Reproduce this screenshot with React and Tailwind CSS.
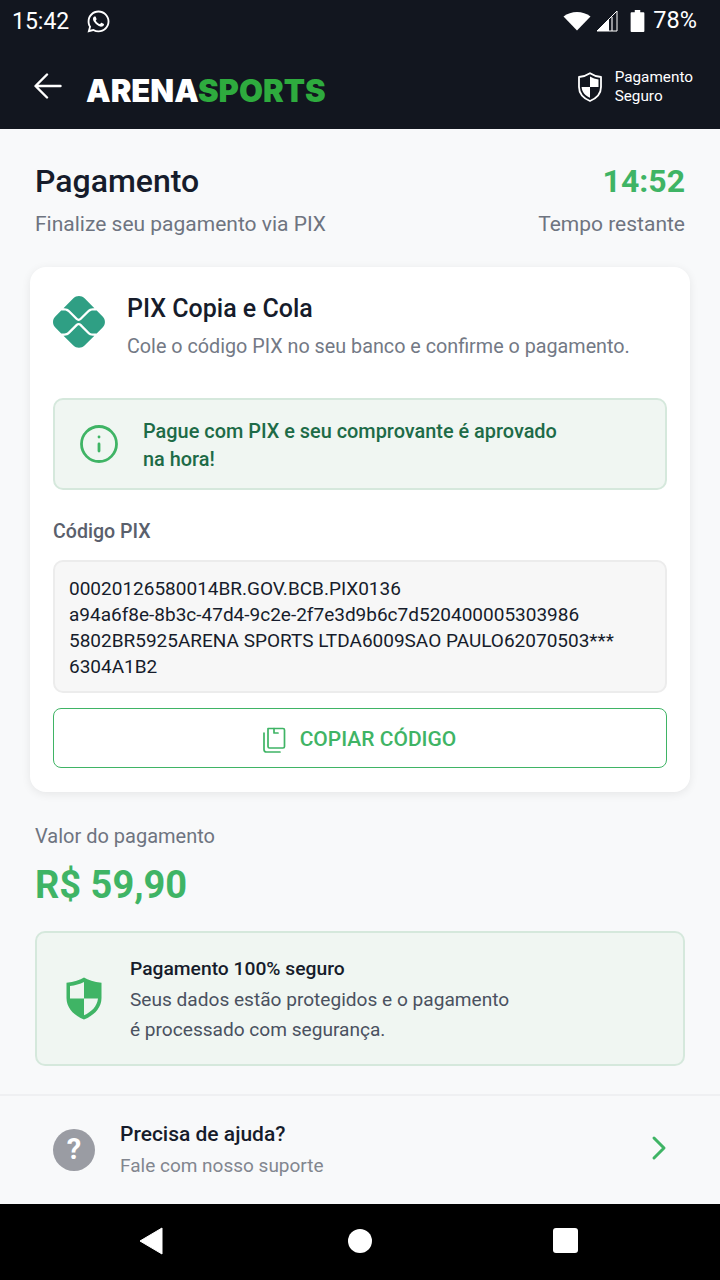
import React from 'react';
import { FaWhatsapp } from 'react-icons/fa';
import { FaPix } from 'react-icons/fa6';
import { ChevronRight, Info } from 'lucide-react';

const ShieldOutline = ({ className }) => (
    <svg viewBox="0 0 24 30" className={className}>
        <path d="M12 1.2 C15 3.2 19 4.6 23 5 V15 C23 22 18 26.5 12 29 C6 26.5 1 22 1 15 V5 C5 4.6 9 3.2 12 1.2 Z" fill="none" stroke="currentColor" strokeWidth="1.8" strokeLinejoin="round" />
        <path d="M12 4.5 C14.5 6 17.5 7 20.5 7.5 V15 H12 Z M12 15 V25.8 C7.5 23.8 4 20.5 3.6 15 Z" fill="currentColor" />
    </svg>
);

const ShieldFilled = ({ className }) => (
    <svg viewBox="0 0 36 43" className={className}>
        <path d="M18 0.5 C22 3 28 5 35.5 5.8 V21 C35.5 31 28 38.5 18 42.5 C8 38.5 0.5 31 0.5 21 V5.8 C8 5 14 3 18 0.5 Z" fill="currentColor" />
        <path d="M18 5 V21.5 H4 V9 C9 8.4 14 7 18 5 Z M18 21.5 H32 C31 29.5 25.5 35 18 38.2 Z" fill="#eef5f0" />
    </svg>
);

const CopyIcon = ({ className }) => (
    <svg viewBox="0 0 24 26" fill="none" stroke="currentColor" strokeWidth="1.7" strokeLinejoin="round" strokeLinecap="round" className={className}>
        <path d="M6 1.5 H21 A1.5 1.5 0 0 1 22.5 3 V19.5 A1.5 1.5 0 0 1 21 21 H7.5 A1.5 1.5 0 0 1 6 19.5 Z" />
        <path d="M2 6 V22.5 A2.5 2.5 0 0 0 4.5 25 H18" />
        <path d="M12 1.5 V6 H16" />
    </svg>
);

export default function App() {
    return (
        <div className="flex flex-col w-[720px] h-[1280px] overflow-hidden bg-[#f8f9fa] font-['Roboto',sans-serif]">
            {/* status bar + app header */}
            <div className="bg-[#12161f] text-white h-[129px] shrink-0">
                <div className="flex items-center justify-between h-[42px] pl-[12px] pr-[23px]">
                    <div className="flex items-center gap-[17px]">
                        <span className="text-[23px] leading-none">15:42</span>
                        <FaWhatsapp className="w-[25px] h-[25px]" />
                    </div>
                    <div className="flex items-center">
                        <svg viewBox="0 0 28 20" className="w-[28px] h-[20px]">
                            <path d="M14 19.5 L0.5 5.5 C8 -0.5 20 -0.5 27.5 5.5 Z" fill="white" />
                        </svg>
                        <svg viewBox="0 0 22 22" className="w-[22px] h-[22px] ml-[5px]">
                            <path d="M1 21 L21 1 V21 Z" fill="none" stroke="white" strokeWidth="1" />
                            <path d="M1 21 L13 9 V21 Z" fill="white" />
                            <path d="M15 7 H17 V21 H15 Z" fill="white" fillOpacity="0.55" />
                        </svg>
                        <svg viewBox="0 0 16 24" className="w-[15px] h-[22px] ml-[12px]">
                            <path d="M5 0 H11 V2.5 H14.5 A1 1 0 0 1 15.5 3.5 V23 A1 1 0 0 1 14.5 24 H1.5 A1 1 0 0 1 0.5 23 V3.5 A1 1 0 0 1 1.5 2.5 H5 Z" fill="white" />
                        </svg>
                        <span className="text-[23.5px] leading-none ml-[8px]">78%</span>
                    </div>
                </div>
                <div className="flex items-center justify-between h-[87px] pl-[34px] pr-[27px]">
                    <div className="flex items-center">
                        <svg viewBox="0 0 28 26" fill="none" stroke="currentColor" strokeWidth="2.4" strokeLinecap="round" strokeLinejoin="round" className="w-[28px] h-[26px]">
                            <path d="M26.5 13 H2 M13 1.5 L1.5 13 L13 24.5" />
                        </svg>
                        <span className="ml-[24px] mt-[9px] text-[31px] leading-none font-black tracking-[0px] font-['Inter',sans-serif]">
                            ARENA<span className="text-[#2eab3e]">SPORTS</span>
                        </span>
                    </div>
                    <div className="flex items-center gap-[13px] mt-[3px]">
                        <ShieldOutline className="w-[24px] h-[30px]" />
                        <div className="text-[15.3px] leading-[19px]">
                            <div>Pagamento</div>
                            <div>Seguro</div>
                        </div>
                    </div>
                </div>
            </div>

            {/* main */}
            <div className="flex-1 flex flex-col">
                <div className="flex justify-between px-[35px] pt-[33px]">
                    <div>
                        <h1 className="text-[32px] leading-[38px] font-medium text-[#161c2b]">Pagamento</h1>
                        <p className="text-[21px] leading-[24px] mt-[12px] text-[#6e7480]">Finalize seu pagamento via PIX</p>
                    </div>
                    <div className="text-right">
                        <div className="text-[32px] leading-[38px] font-bold text-[#3fb465]">14:52</div>
                        <div className="text-[21px] leading-[24px] mt-[12px] text-[#6e7480]">Tempo restante</div>
                    </div>
                </div>

                <div className="mx-[30px] mt-[31px] h-[525px] bg-white rounded-[16px] shadow-[0_2px_10px_rgba(0,0,0,0.08)] px-[23px] pt-[24px]">
                    <div className="flex items-start">
                        <FaPix className="w-[52px] h-[52px] mt-[5px] text-[#2f9f84]" />
                        <div className="ml-[22px] mt-[2px]">
                            <h2 className="text-[25px] leading-[32px] font-medium text-[#161c2b]">PIX Copia e Cola</h2>
                            <p className="text-[19.75px] leading-[24px] mt-[10px] text-[#737985]">Cole o código PIX no seu banco e confirme o pagamento.</p>
                        </div>
                    </div>

                    <div className="flex items-center mt-[39px] h-[92px] rounded-[10px] border-2 border-[#d5e8dc] bg-[#f0f6f2] pl-[23px]">
                        <Info className="w-[42px] h-[42px] text-[#3fb465] shrink-0" strokeWidth={1.6} />
                        <p className="ml-[23px] mt-[4px] text-[19.9px] leading-[28px] font-medium text-[#1d6b47]">
                            Pague com PIX e seu comprovante é aprovado<br />na hora!
                        </p>
                    </div>

                    <div className="mt-[30px] text-[19.6px] leading-[24px] font-medium text-[#5a606c]">Código PIX</div>

                    <div className="mt-[16px] h-[133px] rounded-[10px] border-2 border-[#ececec] bg-[#f7f7f7] px-[14px] pt-[14px] text-[19px] leading-[26px] text-[#161c2b] whitespace-nowrap">
                        00020126580014BR.GOV.BCB.PIX0136<br />
                        a94a6f8e-8b3c-47d4-9c2e-2f7e3d9b6c7d520400005303986<br />
                        5802BR5925ARENA SPORTS LTDA6009SAO PAULO62070503***<br />
                        6304A1B2
                    </div>

                    <button className="flex items-center justify-center w-full h-[60px] mt-[15px] pt-[3px] rounded-[8px] border border-[#3fb465] bg-white text-[#3fb465]">
                        <CopyIcon className="w-[24px] h-[26px] -ml-[2px]" />
                        <span className="ml-[14px] text-[21px] font-medium">COPIAR CÓDIGO</span>
                    </button>
                </div>

                <div className="px-[35px] mt-[32px]">
                    <div className="text-[20px] leading-[24px] text-[#6e7480]">Valor do pagamento</div>
                    <div className="text-[38px] leading-[46px] mt-[14px] font-bold text-[#3fb465]">R$ 59,90</div>
                </div>

                <div className="flex items-center mx-[35px] mt-[23px] h-[135px] rounded-[10px] border-2 border-[#d5e8dc] bg-[#f0f6f2] pl-[29px]">
                    <ShieldFilled className="w-[36px] h-[43px] text-[#3fb465]" />
                    <div className="ml-[28px] mt-[4px]">
                        <div className="text-[19.25px] leading-[26px] font-medium text-[#161c2b]">Pagamento 100% seguro</div>
                        <div className="text-[19.1px] leading-[30px] mt-[3px] text-[#4a5160]">
                            Seus dados estão protegidos e o pagamento<br />é processado com segurança.
                        </div>
                    </div>
                </div>

                <div className="flex items-center flex-1 mt-[28px] border-t-2 border-[#eff0f2] pl-[53px] pr-[41px] pb-[1px]">
                    <div className="flex items-center justify-center w-[42px] h-[42px] rounded-full bg-[#9a9ca3] text-white text-[29px] font-bold">?</div>
                    <div className="ml-[25px] flex-1 -mt-[1px]">
                        <div className="text-[21px] leading-[26px] font-medium text-[#161c2b]">Precisa de ajuda?</div>
                        <div className="text-[19px] leading-[24px] mt-[7px] text-[#82868f]">Fale com nosso suporte</div>
                    </div>
                    <ChevronRight className="w-[40px] h-[40px] -mt-[3px] text-[#3fb465]" strokeWidth={1.8} />
                </div>
            </div>

            {/* android nav */}
            <div className="flex items-center h-[76px] shrink-0 bg-black pb-[3px] pl-[139px]">
                <svg viewBox="0 0 24 28" className="w-[24px] h-[28px]"><path d="M1 14 L23 1 V27 Z" fill="white" strokeLinejoin="round" stroke="white" strokeWidth="1" /></svg>
                <div className="w-[24px] h-[24px] ml-[185px] rounded-full bg-white" />
                <div className="w-[25px] h-[25px] ml-[181px] rounded-[3px] bg-white" />
            </div>
        </div>
    );
}
